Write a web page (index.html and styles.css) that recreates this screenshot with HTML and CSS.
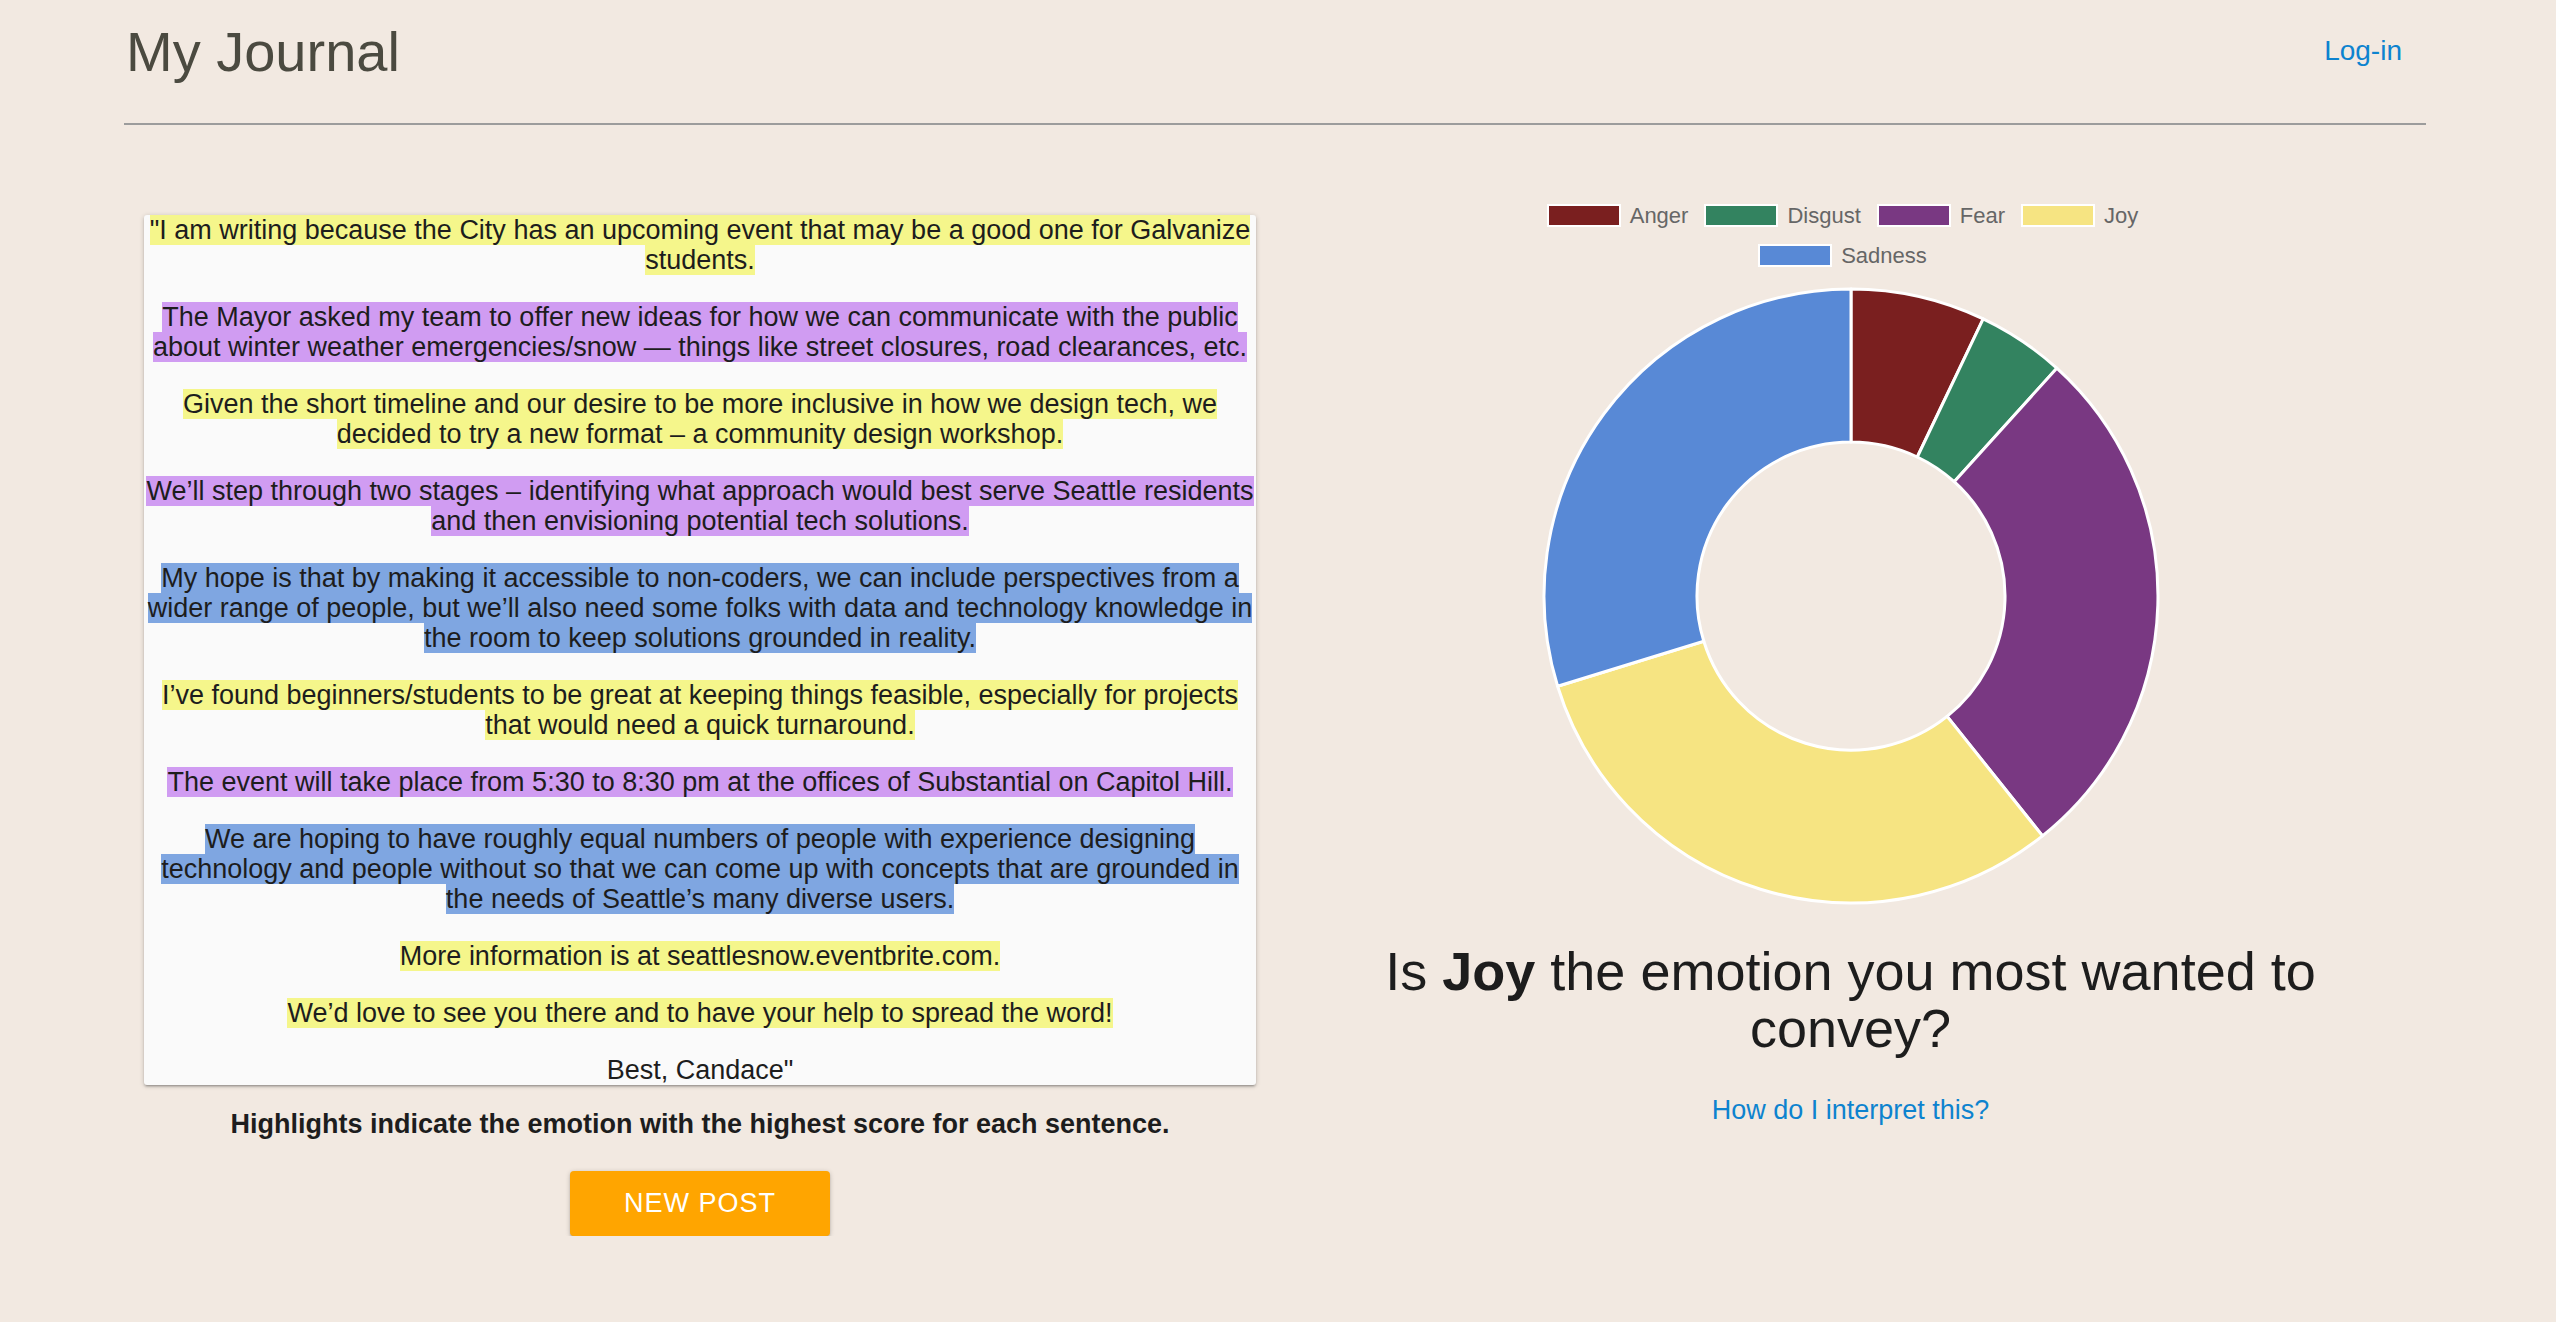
FILE: index.html
```html
<!DOCTYPE html>
<html lang="en">
<head>
<meta charset="utf-8">
<title>My Journal</title>
<link rel="stylesheet" href="styles.css">
</head>
<body>
<div class="page">
  <header class="header">
    <h1 class="brand">My Journal</h1>
    <a class="login" href="#">Log-in</a>
  </header>
  <main class="main">
    <section class="left">
      <div class="card">
        <p><span class="hl joy">"I am writing because the City has an upcoming event that may be a good one for Galvanize students.</span></p>
        <p><span class="hl fear">The Mayor asked my team to offer new ideas for how we can communicate with the public about winter weather emergencies/snow — things like street closures, road clearances, etc.</span></p>
        <p><span class="hl joy">Given the short timeline and our desire to be more inclusive in how we design tech, we decided to try a new format – a community design workshop.</span></p>
        <p><span class="hl fear">We’ll step through two stages – identifying what approach would best serve Seattle residents and then envisioning potential tech solutions.</span></p>
        <p><span class="hl sad">My hope is that by making it accessible to non-coders, we can include perspectives from a wider range of people, but we’ll also need some folks with data and technology knowledge in the room to keep solutions grounded in reality.</span></p>
        <p><span class="hl joy">I’ve found beginners/students to be great at keeping things feasible, especially for projects that would need a quick turnaround.</span></p>
        <p><span class="hl fear">The event will take place from 5:30 to 8:30 pm at the offices of Substantial on Capitol Hill.</span></p>
        <p><span class="hl sad">We are hoping to have roughly equal numbers of people with experience designing technology and people without so that we can come up with concepts that are grounded in the needs of Seattle’s many diverse users.</span></p>
        <p><span class="hl joy">More information is at seattlesnow.eventbrite.com.</span></p>
        <p><span class="hl joy">We’d love to see you there and to have your help to spread the word!</span></p>
        <p>Best, Candace"</p>
      </div>
      <p class="note">Highlights indicate the emotion with the highest score for each sentence.</p>
      <a class="btn" href="#">New Post</a>
    </section>
    <section class="right">
      <ul class="legend">
        <li class="legend-item"><span class="swatch anger"></span><span class="legend-label">Anger</span></li>
        <li class="legend-item"><span class="swatch disgust"></span><span class="legend-label">Disgust</span></li>
        <li class="legend-item"><span class="swatch fear-c"></span><span class="legend-label">Fear</span></li>
        <li class="legend-item"><span class="swatch joy-c"></span><span class="legend-label">Joy</span></li>
        <li class="legend-item"><span class="swatch sad-c"></span><span class="legend-label">Sadness</span></li>
      </ul>
      <svg class="donut" width="620" height="620" viewBox="0 0 620 620">
        <g stroke="#ffffff" stroke-width="3" stroke-linejoin="round">
          <path fill="#7a1f1f" d="M310,3 A307,307 0 0 1 442.2,32.9 L376.3,171.0 A154,154 0 0 0 310,156 Z"/>
          <path fill="#338360" d="M442.2,32.9 A307,307 0 0 1 515.8,82.2 L413.2,195.7 A154,154 0 0 0 376.3,171.0 Z"/>
          <path fill="#793882" d="M515.8,82.2 A307,307 0 0 1 501.5,549.9 L406.1,430.4 A154,154 0 0 0 413.2,195.7 Z"/>
          <path fill="#f6e482" d="M501.5,549.9 A307,307 0 0 1 16.6,400.3 L162.8,355.3 A154,154 0 0 0 406.1,430.4 Z"/>
          <path fill="#5889d6" d="M16.6,400.3 A307,307 0 0 1 310,3 L310,156 A154,154 0 0 0 162.8,355.3 Z"/>
        </g>
      </svg>
      <h4 class="question">Is <b>Joy</b> the emotion you most wanted to convey?</h4>
      <a class="help" href="#">How do I interpret this?</a>
    </section>
  </main>
</div>
</body>
</html>
```
FILE: styles.css
```css
html, body {
  margin: 0;
  padding: 0;
}
body {
  background: #f2e9e1;
  font-family: "Liberation Sans", Arial, Helvetica, sans-serif;
  color: rgba(0, 0, 0, 0.87);
}
.page {
  width: 2302px;
  margin: 0 0 0 124px;
}
.header {
  display: flex;
  justify-content: space-between;
  align-items: flex-start;
  padding: 19px 0 39px;
  border-bottom: 2px solid #9c9c9c;
}
.brand {
  margin: 0 0 0 2px;
  font-size: 56px;
  font-weight: 400;
  line-height: normal;
  color: #4b4a40;
}
.login {
  margin: 16px 24px 0 0;
  font-size: 28px;
  color: #0d83cf;
  text-decoration: none;
}
.main {
  display: grid;
  grid-template-columns: 1fr 1fr;
}
.left {
  padding: 0 19px 0 20px;
  display: flex;
  flex-direction: column;
  align-items: center;
}
.card {
  align-self: stretch;
  margin-top: 90px;
  padding: 0 2px;
  background: #fafafa;
  border-radius: 3px;
  box-shadow: 0 2px 2px 0 rgba(0,0,0,0.14), 0 3px 1px -2px rgba(0,0,0,0.12), 0 1px 5px 0 rgba(0,0,0,0.2);
  text-align: center;
  font-size: 27px;
  line-height: 30px;
  color: #1d1d1d;
}
.card p {
  margin: 27px 0;
}
.card p:first-child {
  margin-top: 0;
}
.card p:last-child {
  margin-bottom: 0;
}
.hl.joy { background: #f5f68b; }
.hl.fear { background: #d09cf2; }
.hl.sad { background: #7fa6e1; }
.note {
  margin: 24px 0 0;
  font-size: 27px;
  font-weight: 700;
  line-height: 31px;
  color: #1d1d1d;
  text-align: center;
}
.btn {
  margin-top: 31px;
  width: 260px;
  height: 65px;
  display: flex;
  align-items: center;
  justify-content: center;
  background: #ffa500;
  color: #fff;
  font-size: 27px;
  letter-spacing: 1px;
  text-transform: uppercase;
  text-decoration: none;
  border-radius: 4px;
  box-shadow: 0 2px 2px 0 rgba(0,0,0,0.14), 0 3px 1px -2px rgba(0,0,0,0.12), 0 1px 5px 0 rgba(0,0,0,0.2);
}
.right {
  padding: 0 20px;
  display: flex;
  flex-direction: column;
  align-items: center;
  text-align: center;
}
.legend {
  list-style: none;
  margin: 79px 0 0;
  padding: 0;
  max-width: 640px;
  display: flex;
  flex-wrap: wrap;
  justify-content: center;
  row-gap: 17px;
}
.legend-item {
  display: flex;
  align-items: center;
  height: 23px;
  margin-right: 16px;
}
.swatch {
  width: 70px;
  height: 19px;
  border: 2px solid #fff;
  margin-right: 9px;
}
.swatch.anger { background: #7a1f1f; }
.swatch.disgust { background: #338360; }
.swatch.fear-c { background: #793882; }
.swatch.joy-c { background: #f6e482; }
.swatch.sad-c { background: #5889d6; }
.legend-label {
  font-size: 22px;
  line-height: 23px;
  color: #666;
}
.donut {
  display: block;
  margin-top: 19px;
}
.question {
  margin: 37px 0 0;
  font-size: 54px;
  font-weight: 400;
  line-height: 57px;
  color: #1d1d1d;
}
.question b {
  font-weight: 700;
}
.help {
  margin-top: 38px;
  font-size: 27px;
  line-height: 31px;
  color: #0d83cf;
  text-decoration: none;
}
```
